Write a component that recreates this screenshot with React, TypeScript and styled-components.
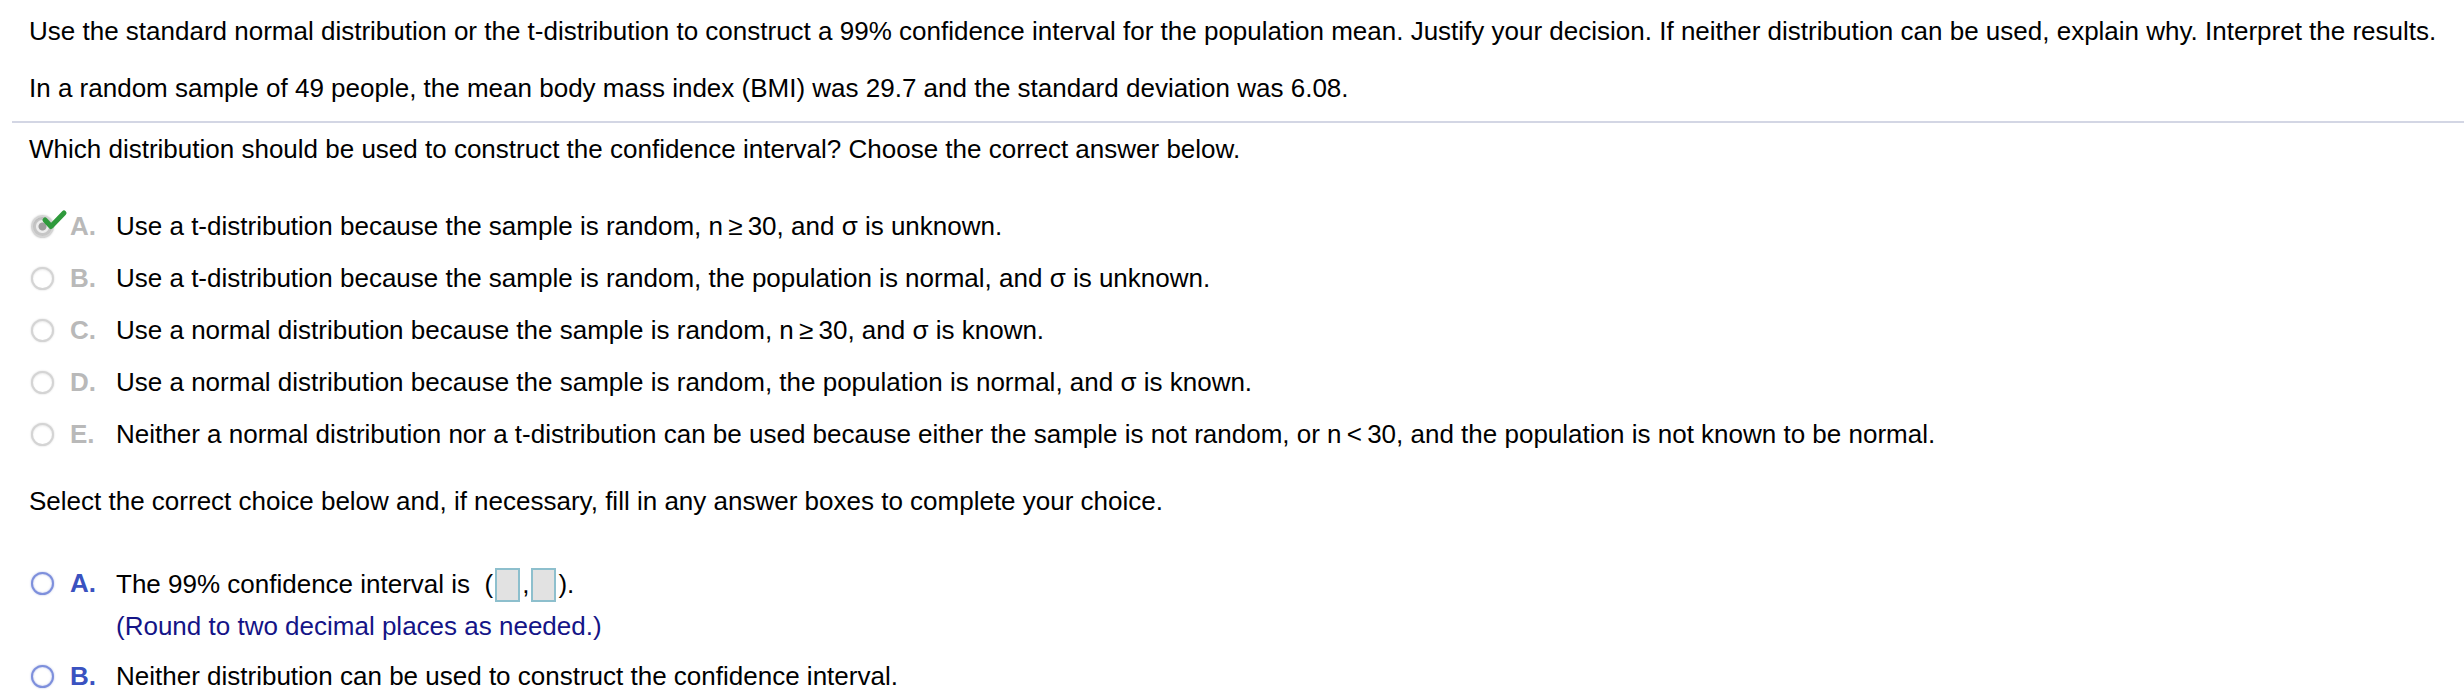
import React, { FC } from "react";
import styled, { createGlobalStyle } from "styled-components";

const GlobalStyle = createGlobalStyle`
  html, body {
    margin: 0;
    padding: 0;
    background: #ffffff;
  }
  body {
    font-family: "Liberation Sans", Arial, Helvetica, sans-serif;
    font-size: 26px;
    color: #000;
  }
`;

const Page = styled.div`
  padding-top: 16px;
  width: 2464px;
`;

const Para = styled.p<{ $mt?: number }>`
  margin: ${(p) => p.$mt ?? 0}px 0 0 0;
  padding-left: 29px;
  line-height: 30px;
  white-space: nowrap;
`;

const Header = styled.div`
  margin-left: 12px;
  padding-bottom: 18px;
  border-bottom: 2px solid #d3d6e4;

  ${Para} {
    padding-left: 17px;
  }
`;

const OptionList = styled.div<{ $mt: number; $gap: number }>`
  display: flex;
  flex-direction: column;
  gap: ${(p) => p.$gap}px;
  margin-top: ${(p) => p.$mt}px;
`;

const Row = styled.div`
  display: flex;
  align-items: flex-start;
  padding-left: 31px;
  line-height: 30px;
  white-space: nowrap;
`;

const RadioSlot = styled.div`
  position: relative;
  width: 23px;
  height: 30px;
  flex: none;
  display: flex;
  align-items: center;
`;

const Ring = styled.span<{ $blue?: boolean; $checked?: boolean }>`
  display: block;
  width: 23px;
  height: 23px;
  border-radius: 50%;
  box-sizing: border-box;
  border: 2px solid ${(p) => (p.$blue ? "#7d8fdc" : "#d4d4d4")};
  background: ${(p) =>
    p.$checked
      ? "radial-gradient(circle, #9d9d9d 0 3.5px, #ededed 4.5px 6px, #c6c6c6 7px)"
      : "#fff"};
  box-shadow: ${(p) =>
    p.$blue
      ? "inset 0 0 2px rgba(90,110,200,0.5), 0 0 2px rgba(90,110,200,0.5)"
      : "inset 0 1px 2px rgba(0,0,0,0.08), 0 0 2px rgba(0,0,0,0.18)"};
`;

const Check = styled.svg`
  position: absolute;
  left: 10px;
  top: 0;
  overflow: visible;
`;

const Letter = styled.span<{ $blue?: boolean }>`
  flex: none;
  width: 46px;
  margin-left: 16px;
  font-weight: bold;
  color: ${(p) => (p.$blue ? "#3a52c0" : "#b9b9b9")};
`;

const Body = styled.div`
  display: flex;
  flex-direction: column;
`;

const Hint = styled.span`
  color: #141487;
  margin-top: 9px;
`;

const Blank = styled.span`
  display: inline-block;
  width: 25px;
  height: 34px;
  margin: 0 2px;
  vertical-align: -9px;
  box-sizing: border-box;
  border: 2px solid #8dbfcd;
  background: #e2e2e2;
`;

const Radio: FC<{ blue?: boolean; checked?: boolean }> = ({ blue, checked }) => (
  <RadioSlot>
    <Ring $blue={blue} $checked={checked} />
    {checked && (
      <Check width="26" height="20" viewBox="0 0 26 20">
        <path
          d="M4 9 L10 15.5 L23 2"
          fill="none"
          stroke="#2f9a3c"
          strokeWidth="5"
          strokeLinecap="round"
          strokeLinejoin="round"
        />
      </Check>
    )}
  </RadioSlot>
);

const firstChoices = [
  {
    key: "A",
    text: "Use a t-distribution because the sample is random, n\u2009\u2265\u200930, and \u03c3 is unknown.",
    checked: true,
  },
  {
    key: "B",
    text: "Use a t-distribution because the sample is random, the population is normal, and \u03c3 is unknown.",
  },
  {
    key: "C",
    text: "Use a normal distribution because the sample is random, n\u2009\u2265\u200930, and \u03c3 is known.",
  },
  {
    key: "D",
    text: "Use a normal distribution because the sample is random, the population is normal, and \u03c3 is known.",
  },
  {
    key: "E",
    text: "Neither a normal distribution nor a t-distribution can be used because either the sample is not random, or n\u2009<\u200930, and the population is not known to be normal.",
  },
];

const App: FC = () => {
  return (
    <>
      <GlobalStyle />
      <Page>
        <Para>
          Use the standard normal distribution or the t-distribution to construct a 99% confidence
          interval for the population mean. Justify your decision. If neither distribution can be
          used, explain why. Interpret the results.
        </Para>
        <Header>
          <Para $mt={27}>
            In a random sample of 49 people, the mean body mass index (BMI) was 29.7 and the standard
            deviation was 6.08.
          </Para>
        </Header>
        <Para $mt={11}>
          Which distribution should be used to construct the confidence interval? Choose the correct
          answer below.
        </Para>

        <OptionList $mt={47} $gap={22}>
          {firstChoices.map((c) => (
            <Row key={c.key}>
              <Radio checked={c.checked} />
              <Letter>{c.key}.</Letter>
              <span>{c.text}</span>
            </Row>
          ))}
        </OptionList>

        <Para $mt={37}>
          Select the correct choice below and, if necessary, fill in any answer boxes to complete your
          choice.
        </Para>

        <OptionList $mt={52} $gap={20}>
          <Row>
            <Radio blue />
            <Letter $blue>A.</Letter>
            <Body>
              <span>
                The 99% confidence interval is&nbsp;&nbsp;(<Blank />,<Blank />).
              </span>
              <Hint>(Round to two decimal places as needed.)</Hint>
            </Body>
          </Row>
          <Row>
            <Radio blue />
            <Letter $blue>B.</Letter>
            <span>Neither distribution can be used to construct the confidence interval.</span>
          </Row>
        </OptionList>
      </Page>
    </>
  );
};

export default App;
